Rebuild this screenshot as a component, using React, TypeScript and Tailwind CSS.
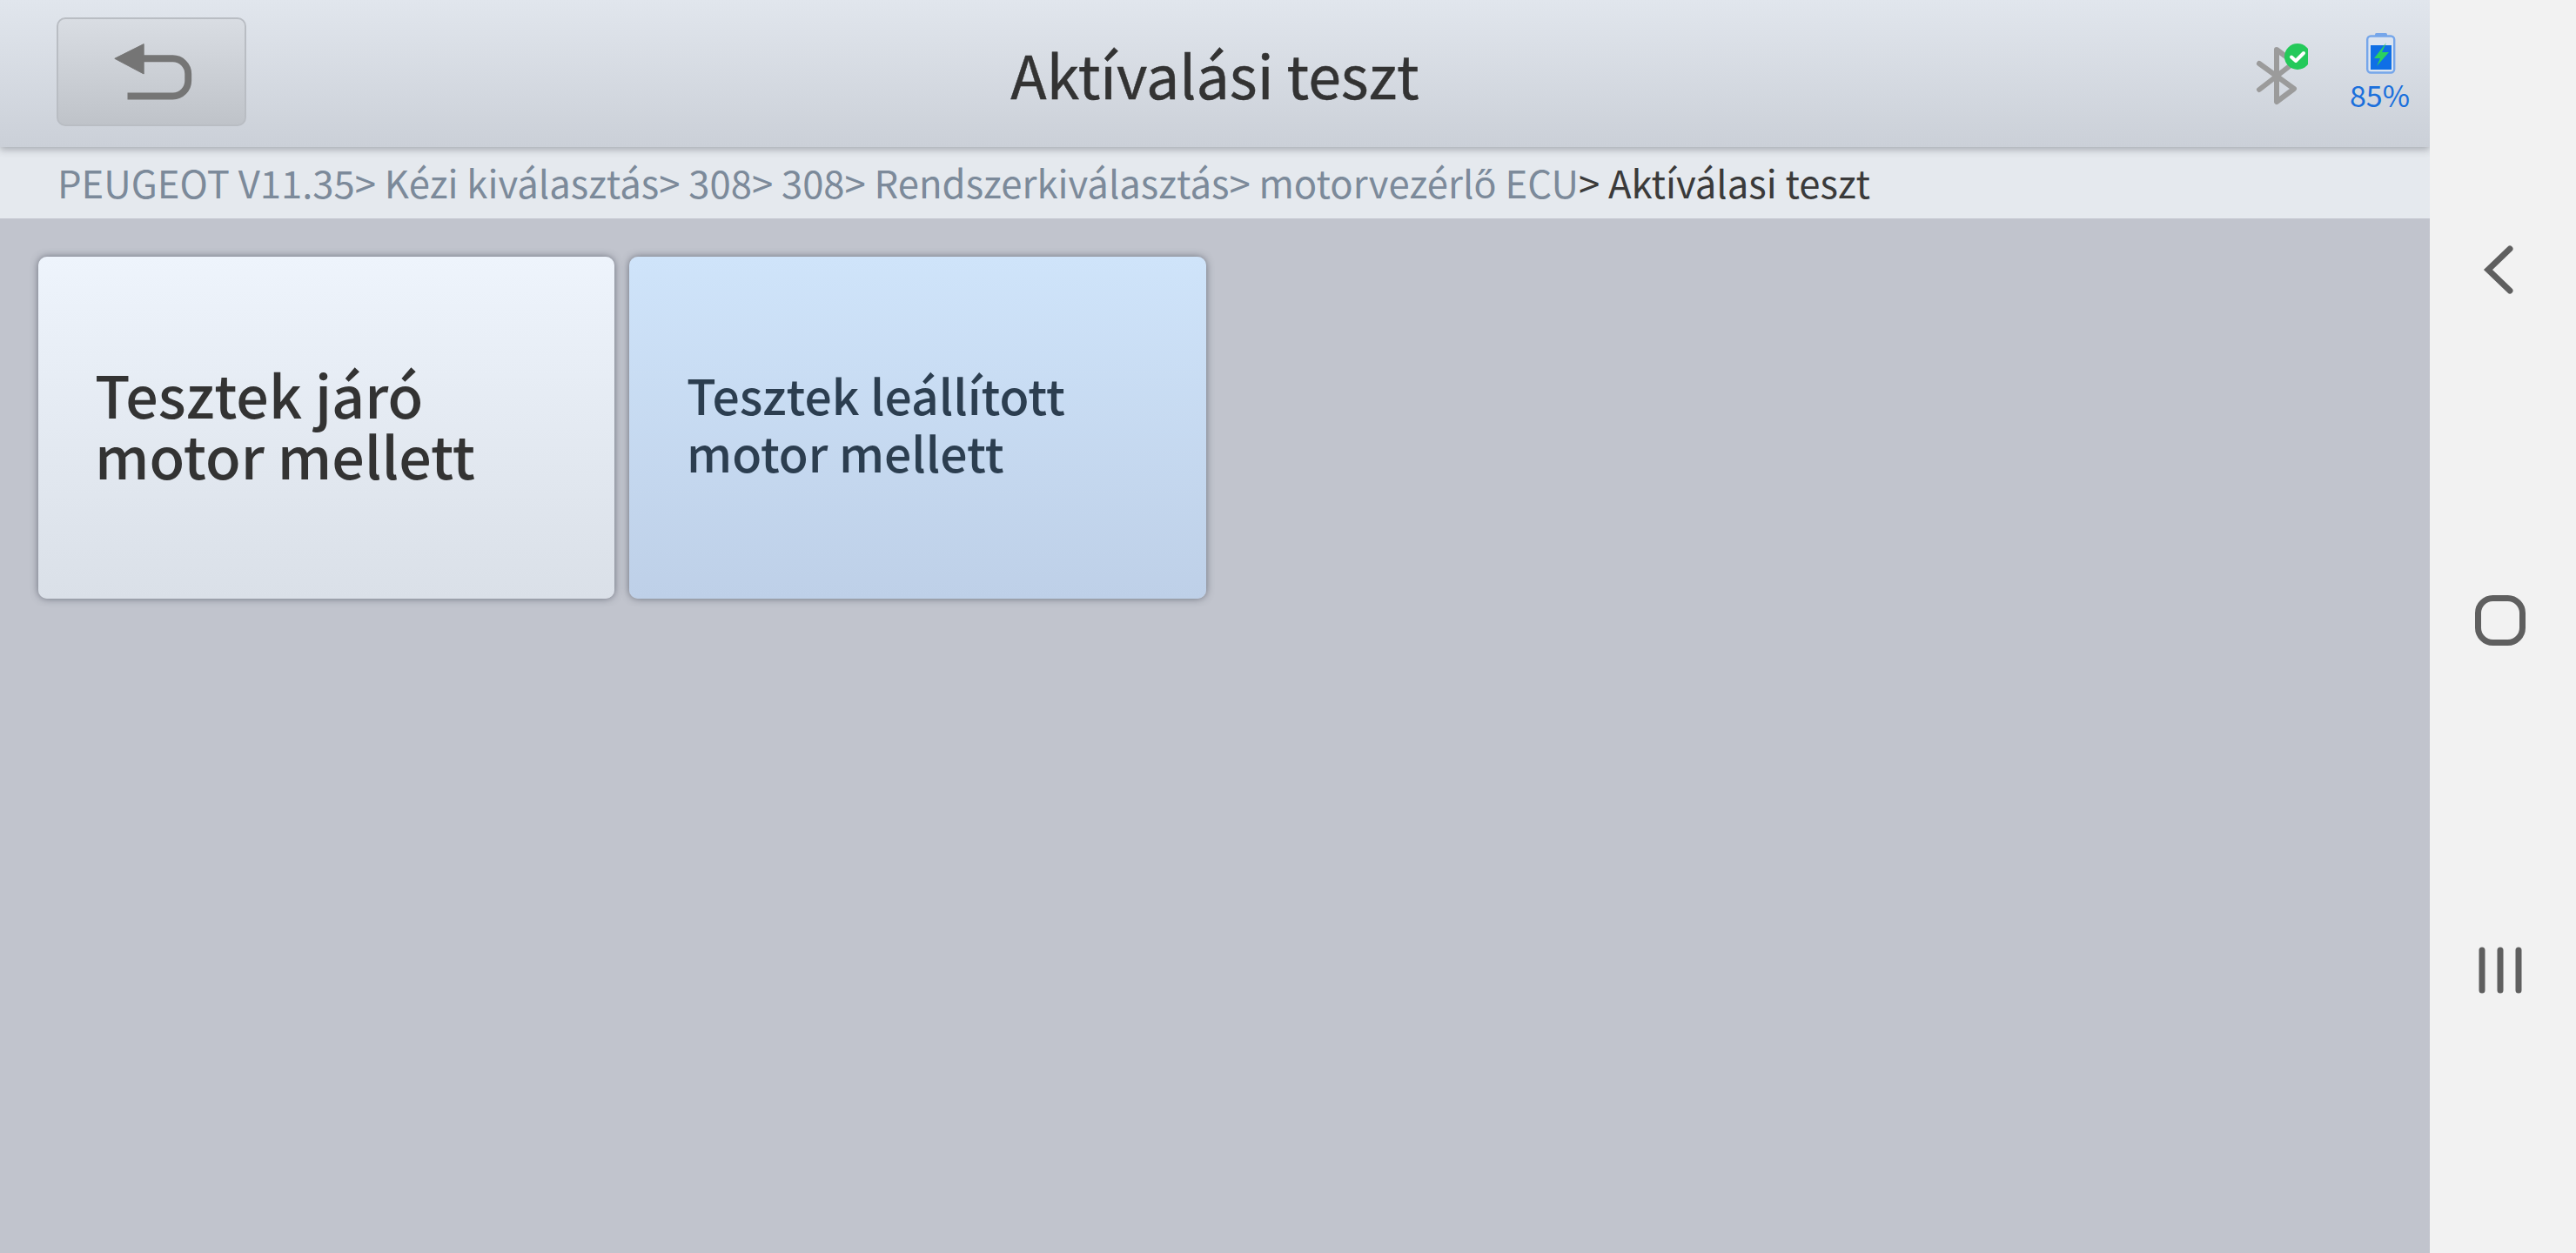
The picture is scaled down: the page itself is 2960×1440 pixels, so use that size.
import React from "react";

const FONT = "[font-family:'Noto_Sans_CJK_SC','Noto_Sans',sans-serif]";

function BackIcon() {
  return (
    <svg width="218" height="125" viewBox="0 0 218 125" className="block">
      <path d="M66 47 L100 30 L100 65 Z" fill="#757575" stroke="#757575" strokeWidth="1" strokeLinejoin="round" />
      <path d="M98 47 H134 A18 18 0 0 1 152 65 V73 A18 18 0 0 1 134 91 H81" fill="none" stroke="#757575" strokeWidth="8" />
    </svg>
  );
}

function BluetoothIcon() {
  return (
    <svg width="60" height="80" viewBox="0 0 60 80" className="block">
      <path
        d="M4 26 L44 55 L24 70 V10 L44 25 L4 56"
        fill="none"
        stroke="#9b9b9b"
        strokeWidth="6"
        strokeLinecap="round"
        strokeLinejoin="round"
      />
      <circle cx="48" cy="18" r="15" fill="#24c95a" />
      <path d="M41 18.5 L46 23 L55 14" fill="none" stroke="#fff" strokeWidth="4" strokeLinecap="round" strokeLinejoin="round" />
    </svg>
  );
}

function BatteryIcon() {
  return (
    <svg width="34" height="47" viewBox="0 0 34 47" className="block">
      <rect x="10" y="0" width="14" height="5" rx="1.5" fill="#76a6ea" />
      <rect x="1.2" y="3.5" width="31" height="42" rx="4" fill="#dbe4f0" stroke="#76a6ea" strokeWidth="2.4" />
      <rect x="5" y="14" width="24" height="28" fill="#0f6fe6" />
      <path d="M23 11 L9 29 H16 L12 38 L26 22 H18 Z" fill="#2bd15f" />
    </svg>
  );
}

function NavBack() {
  return (
    <svg width="36" height="56" viewBox="0 0 36 56" className="block">
      <path d="M31 4 L6 28 L31 52" fill="none" stroke="#5f5f5f" strokeWidth="7" strokeLinecap="round" strokeLinejoin="miter" />
    </svg>
  );
}

function NavHome() {
  return (
    <svg width="58" height="58" viewBox="0 0 58 58" className="block">
      <rect x="3.5" y="3.5" width="51" height="51" rx="17" fill="none" stroke="#5f5f5f" strokeWidth="7" />
    </svg>
  );
}

function NavRecents() {
  return (
    <svg width="50" height="54" viewBox="0 0 50 54" className="block">
      <path d="M4 4 V50 M25 4 V50 M46 4 V50" fill="none" stroke="#5f5f5f" strokeWidth="7" strokeLinecap="round" />
    </svg>
  );
}

export default function App() {
  return (
    <div className={`flex h-[1440px] w-[2960px] overflow-hidden ${FONT}`}>
      <div className="flex h-full w-[2792px] flex-col bg-[#c1c4cd]">
        <header className="relative z-10 grid h-[169px] grid-cols-[1fr_auto_1fr] items-center bg-gradient-to-b from-[#e1e6ed] to-[#cbd0d8] shadow-[0_3px_8px_rgba(90,95,105,0.45)]">
          <div className="pl-[65px]">
            <button className="flex h-[125px] w-[218px] items-center justify-center rounded-[10px] border-2 border-[#b9bdc3] bg-gradient-to-b from-[#d9dde3] to-[#bfc3c9] -translate-y-[2px]">
              <BackIcon />
            </button>
          </div>
          <h1 className="text-[68px] leading-none font-normal text-[#333333] [-webkit-text-stroke:0.5px_#333333]">Aktívalási teszt</h1>
          <div className="flex items-start justify-end pr-[23px]">
            <div className="mt-[5px] mr-[48px]"><BluetoothIcon /></div>
            <div className="-mt-[4px] flex flex-col items-center">
              <div className="translate-x-[2px]"><BatteryIcon /></div>
              <span className="mt-[5px] text-[34px] leading-[38px] text-[#1a6fdc]">85%</span>
            </div>
          </div>
        </header>
        <nav className="flex h-[82px] items-center whitespace-nowrap bg-[#e5e9ee] pl-[66px] text-[43.65px] leading-none text-[#7c8a9a]">
          <span>PEUGEOT V11.35&gt; Kézi kiválasztás&gt; 308&gt; 308&gt; Rendszerkiválasztás&gt; motorvezérlő ECU</span>
          <span className="text-[#3a3a3a]">&gt; Aktíválasi teszt</span>
        </nav>
        <main className="flex gap-[17px] pt-[44px] pl-[44px]">
          <button className="flex h-[393px] w-[662px] items-center rounded-[10px] bg-gradient-to-b from-[#eef4fc] to-[#dae0e8] pb-[10px] pl-[65px] text-left text-[66.3px] font-medium leading-[70px] text-[#333333] shadow-[0_0_8px_rgba(70,75,90,0.7)]">
            <span>Tesztek járó<br />motor mellett</span>
          </button>
          <button className="flex h-[393px] w-[663px] items-center rounded-[10px] bg-gradient-to-b from-[#cfe4fa] to-[#bed0e8] pb-[11px] pl-[66px] text-left text-[55.3px] font-medium leading-[66px] text-[#2c3e50] shadow-[0_0_8px_rgba(70,75,90,0.7)]">
            <span>Tesztek leállított<br />motor mellett</span>
          </button>
        </main>
      </div>
      <aside className="relative z-20 flex h-full flex-1 flex-col items-center bg-[#f2f2f2] pt-[282px] pr-[7px]">
        <div className="ml-[-3px]"><NavBack /></div>
        <div className="mt-[346px]"><NavHome /></div>
        <div className="mt-[346px]"><NavRecents /></div>
      </aside>
    </div>
  );
}
